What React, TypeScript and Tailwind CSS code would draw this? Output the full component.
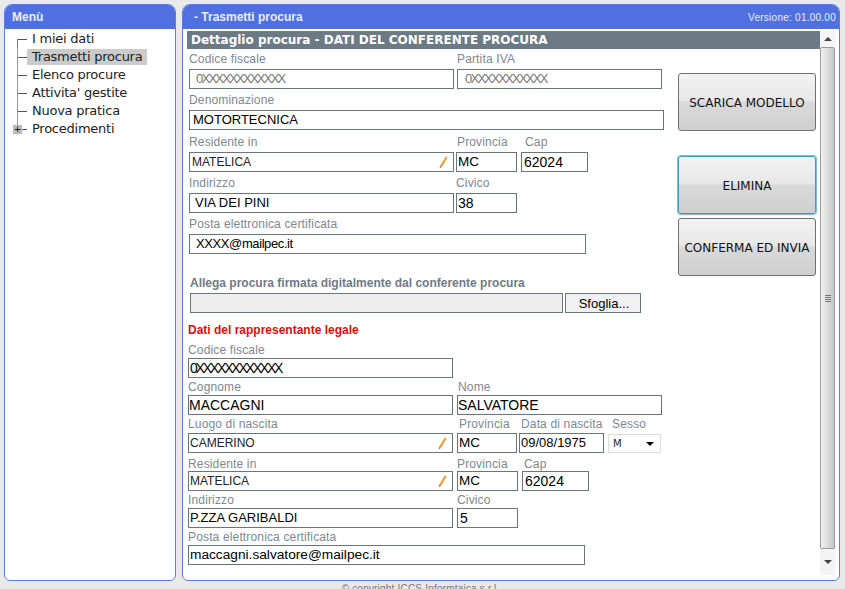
import { ReactNode } from "react";

const menu = ["I miei dati", "Trasmetti procura", "Elenco procure", "Attivita' gestite", "Nuova pratica", "Procedimenti"];

function Pencil() {
  return (
    <svg width="9" height="13" viewBox="0 0 9 13" className="shrink-0">
      <path d="M6.8 0.5 L8.6 1.6 L3 11 L1 9.8 Z" fill="#e9a136" />
      <path d="M1 9.8 L0.6 12.6 L3 11 Z" fill="#8f8a7c" />
    </svg>
  );
}

type FieldProps = {
  label: string;
  value?: string;
  width: string;
  labelClass?: string;
  valueClass?: string;
  pencil?: boolean;
};

// label on top, boxed value under it
function Field({ label, value, width, labelClass = "h-[20px]", valueClass = "pl-[3px] text-[14px] text-black", pencil }: FieldProps) {
  return (
    <div className={`flex flex-col shrink-0 ${width}`}>
      <div className={`flex items-center text-[12px] tracking-[0.15px] text-[#7d8892] whitespace-nowrap ${labelClass}`}>{label}</div>
      <div className={`flex h-[20px] items-center justify-between border border-[#69747e] bg-white pr-[5px] whitespace-nowrap ${valueClass}`}>
        <span>{value}</span>
        {pencil && <Pencil />}
      </div>
    </div>
  );
}

function Row({ children, className = "" }: { children: ReactNode; className?: string }) {
  return <div className={`flex ${className}`}>{children}</div>;
}

function ActionButton({ children, focused }: { children: ReactNode; focused?: boolean }) {
  return (
    <button
      className={`flex h-[58px] w-[138px] items-center justify-center rounded-[3px] border bg-[linear-gradient(#f2f2f2_0%,#e8e8e8_47%,#dadada_50%,#cfcfcf_100%)] pt-[1px] text-[12px] text-[#111] ${
        focused ? "border-[#3f9cc6] shadow-[0_0_0_1px_#7cbcd8]" : "border-[#707070]"
      }`}
    >
      {children}
    </button>
  );
}

function Scrollbar() {
  return (
    <div className="flex w-[15px] shrink-0 flex-col items-center bg-[#f4f4f4]">
      <div className="flex h-[16px] w-full items-center justify-center">
        <div className="h-0 w-0 border-x-[4px] border-b-[4px] border-x-transparent border-b-[#444]" />
      </div>
      <div className="flex w-full flex-1 items-center justify-center rounded-[2px] border border-[#9a9a9a] bg-[linear-gradient(90deg,#f2f2f2,#dcdcdc_50%,#c6c6c6)]">
        <div className="flex flex-col gap-[1px]">
          <div className="h-[1px] w-[6px] bg-[#777]" />
          <div className="h-[1px] w-[6px] bg-[#777]" />
          <div className="h-[1px] w-[6px] bg-[#777]" />
          <div className="h-[1px] w-[6px] bg-[#777]" />
        </div>
      </div>
      <div className="flex h-[26px] w-full items-center justify-center">
        <div className="h-0 w-0 border-x-[4px] border-t-[4px] border-x-transparent border-t-[#444]" />
      </div>
    </div>
  );
}

const dimValue = "pl-[6px] text-[13px] tracking-[-1.75px] text-[#777]";
const codeValue = "pl-[1px] text-[14px] tracking-[-2.2px] text-black";
const upperValue = "text-[13px] text-black";
const provValue = "pl-[1px] text-[13.5px] text-black";
const smallValue = "pl-[1px] text-[12px] text-[#222]";

export default function App() {
  return (
    <div className="flex h-[589px] w-[845px] flex-col overflow-hidden bg-[#e9e9e9] font-['Liberation_Sans',Arial,sans-serif]">
      <div className="flex h-[581px] shrink-0 gap-[6px] pl-[4px] pr-[5px] pt-[4px]">
        {/* Menu */}
        <aside className="flex w-[172px] shrink-0 flex-col overflow-hidden rounded-t-[8px] rounded-b-[6px] border border-[#5f7edb] bg-white">
          <div className="flex h-[24px] shrink-0 items-center bg-[#5170e0] pl-[7px] text-[12px] font-bold text-[#e8edff]">Menù</div>
          <ul className="pt-[1px] font-['DejaVu_Sans',Verdana,sans-serif] text-[13px] tracking-[-0.25px] text-[#222]">
            {menu.map((item, i) => (
              <li key={item} className="flex h-[18px] items-center pl-[9px]">
                <div className="relative flex h-full w-[13px] shrink-0 items-center">
                  {i === 0 && <div className="absolute left-[3px] top-[9px] h-[9px] w-[1px] bg-[#777]" />}
                  {i > 0 && i < menu.length - 1 && <div className="absolute left-[3px] top-0 h-full w-[1px] bg-[#999]" />}
                  {i === menu.length - 1 && <div className="absolute left-[3px] top-0 h-[9px] w-[1px] bg-[#999]" />}
                  <div className="ml-[3px] h-[1px] w-[10px] bg-[#555]" />
                  {item === "Procedimenti" && (
                    <div className="absolute left-[-1px] top-[5px] flex h-[9px] w-[9px] items-center justify-center bg-[#bbb] text-[9px] leading-none text-black">+</div>
                  )}
                </div>
                <span className={`h-[16px] px-[5px] leading-[15px] ${item === "Trasmetti procura" ? "bg-[#cbcbcb]" : ""}`}>{item}</span>
              </li>
            ))}
          </ul>
        </aside>

        {/* Main panel */}
        <main className="flex w-[658px] shrink-0 flex-col overflow-hidden rounded-t-[8px] rounded-b-[6px] border border-[#5f7edb] bg-white">
          <div className="flex h-[24px] shrink-0 items-center justify-between bg-[#5170e0] pl-[11px] pr-[3px] text-[#e8edff]">
            <span className="text-[12px] font-bold">- Trasmetti procura</span>
            <span className="text-[10px] tracking-[0.25px]">Versione: 01.00.00</span>
          </div>
          <div className="flex min-h-0 flex-1 pl-[4px] pr-[4px] pt-[2px] pb-[5px]">
            <div className="flex min-w-0 flex-1 flex-col">
              <div className="flex h-[18px] shrink-0 items-center bg-[#6c7a86] pl-[4px] font-['DejaVu_Sans',Verdana,sans-serif] text-[12px] font-bold text-white">
                Dettaglio procura - DATI DEL CONFERENTE PROCURA
              </div>
              <div className="flex flex-1">
                <form className="flex w-[490px] shrink-0 flex-col">
                  {/* Conferente */}
                  <div className="flex flex-col pl-[2px]">
                    <Row>
                      <Field label="Codice fiscale" value="0XXXXXXXXXXXX" width="w-[265px]" valueClass={dimValue} />
                      <Field label="Partita IVA" value="0XXXXXXXXXXX" width="ml-[3px] w-[205px]" valueClass="pl-[7px] text-[13px] tracking-[-1.75px] text-[#777]" />
                    </Row>
                    <Row className="mt-[1px]">
                      <Field label="Denominazione" value="MOTORTECNICA" width="w-[475px]" valueClass={`pl-[3px] ${upperValue}`} />
                    </Row>
                    <Row className="mt-[1px]">
                      <Field label="Residente in" value="MATELICA" width="w-[265px]" labelClass="h-[21px]" valueClass="pl-[2px] text-[12px] text-[#222]" pencil />
                      <Field label="Provincia" value="MC" width="ml-[2px] w-[61px]" labelClass="h-[21px] pl-[1px]" valueClass={provValue} />
                      <Field label="Cap" value="62024" width="ml-[4px] w-[67px]" labelClass="h-[21px] pl-[4px]" valueClass="pl-[2px] text-[14px] text-black" />
                    </Row>
                    <Row>
                      <Field label="Indirizzo" value="VIA DEI PINI" width="w-[265px]" labelClass="h-[21px]" valueClass={`pl-[5px] ${upperValue}`} />
                      <Field label="Civico" value="38" width="ml-[2px] w-[61px]" labelClass="h-[21px]" valueClass="pl-[1px] text-[14px] text-black" />
                    </Row>
                    <Row>
                      <Field label="Posta elettronica certificata" value="XXXX@mailpec.it" width="w-[397px]" labelClass="h-[21px]" valueClass="pl-[6px] text-[13px] tracking-[-0.4px] text-black" />
                    </Row>
                  </div>

                  {/* Allega */}
                  <div className="mt-[19px] flex flex-col pl-[3px]">
                    <div className="flex h-[20px] items-center text-[12px] font-bold text-[#6f7b86]">Allega procura firmata digitalmente dal conferente procura</div>
                    <div className="flex">
                      <div className="h-[20px] w-[373px] border border-[#69747e] bg-[#eeeeee]" />
                      <button className="ml-[2px] h-[20px] w-[76px] border border-[#69747e] bg-[#f1f1f1] pl-[2px] text-[13px] text-black">Sfoglia...</button>
                    </div>
                  </div>

                  {/* Rappresentante legale */}
                  <div className="mt-[7px] flex h-[20px] items-center pl-[1px] text-[12px] font-bold text-[#d81010]">Dati del rappresentante legale</div>
                  <div className="flex flex-col pl-[1px]">
                    <Field label="Codice fiscale" value="0XXXXXXXXXXXX" width="w-[265px]" labelClass="h-[18px] pt-[1px]" valueClass={codeValue} />
                    <Row>
                      <Field label="Cognome" value="MACCAGNI" width="w-[265px]" labelClass="h-[17px]" valueClass="pl-[0px] text-[14px] text-black" />
                      <Field label="Nome" value="SALVATORE" width="ml-[4px] w-[205px]" labelClass="h-[17px] pl-[1px]" valueClass="pl-[0px] text-[14px] text-black" />
                    </Row>
                    <Row>
                      <Field label="Luogo di nascita" value="CAMERINO" width="w-[265px]" labelClass="h-[18px]" valueClass={smallValue} pencil />
                      <Field label="Provincia" value="MC" width="ml-[4px] w-[60px]" labelClass="h-[18px] pl-[2px]" valueClass={provValue} />
                      <Field label="Data di nascita" value="09/08/1975" width="ml-[2px] w-[85px]" labelClass="h-[18px] pl-[2px]" valueClass={`pl-[1px] ${upperValue}`} />
                      <div className="ml-[4px] flex w-[53px] shrink-0 flex-col">
                        <div className="flex h-[18px] items-center pl-[4px] text-[12px] tracking-[0.15px] text-[#7d8892]">Sesso</div>
                        <div className="mt-[1px] flex h-[19px] items-center justify-between border border-[#dcdcdc] bg-white pl-[4px] pr-[6px] font-['DejaVu_Sans',sans-serif] text-[10px] text-[#222]">
                          <span>M</span>
                          <div className="h-0 w-0 border-x-[4px] border-t-[4px] border-x-transparent border-t-black" />
                        </div>
                      </div>
                    </Row>
                    <Row>
                      <Field label="Residente in" value="MATELICA" width="w-[265px]" labelClass="h-[18px] pt-[3px]" valueClass={smallValue} pencil />
                      <Field label="Provincia" value="MC" width="ml-[4px] w-[61px]" labelClass="h-[18px] pt-[3px]" valueClass={provValue} />
                      <Field label="Cap" value="62024" width="ml-[4px] w-[67px]" labelClass="h-[18px] pt-[3px] pl-[2px]" valueClass="pl-[2px] text-[14px] text-black" />
                    </Row>
                    <Row>
                      <Field label="Indirizzo" value="P.ZZA GARIBALDI" width="w-[265px]" labelClass="h-[17px]" valueClass={`pl-[1px] ${upperValue}`} />
                      <Field label="Civico" value="5" width="ml-[4px] w-[61px]" labelClass="h-[17px]" valueClass="pl-[2px] text-[14px] text-black" />
                    </Row>
                    <Field label="Posta elettronica certificata" value="maccagni.salvatore@mailpec.it" width="w-[397px]" labelClass="h-[17px]" valueClass="pl-[1px] text-[13.7px] text-black" />
                  </div>
                </form>

                {/* Actions */}
                <div className="flex flex-1 flex-col items-end pr-[4px] pt-[24px] font-['DejaVu_Sans',Verdana,sans-serif]">
                  <ActionButton>SCARICA MODELLO</ActionButton>
                  <div className="h-[25px] shrink-0" />
                  <ActionButton focused>ELIMINA</ActionButton>
                  <div className="h-[4px] shrink-0" />
                  <ActionButton>CONFERMA ED INVIA</ActionButton>
                </div>
              </div>
            </div>
            <Scrollbar />
          </div>
        </main>
      </div>
      <footer className="shrink-0 pr-[4px] text-center text-[10px] tracking-[0.2px] text-[#777]">© copyright ICCS Informtaica s.r.l.</footer>
    </div>
  );
}
